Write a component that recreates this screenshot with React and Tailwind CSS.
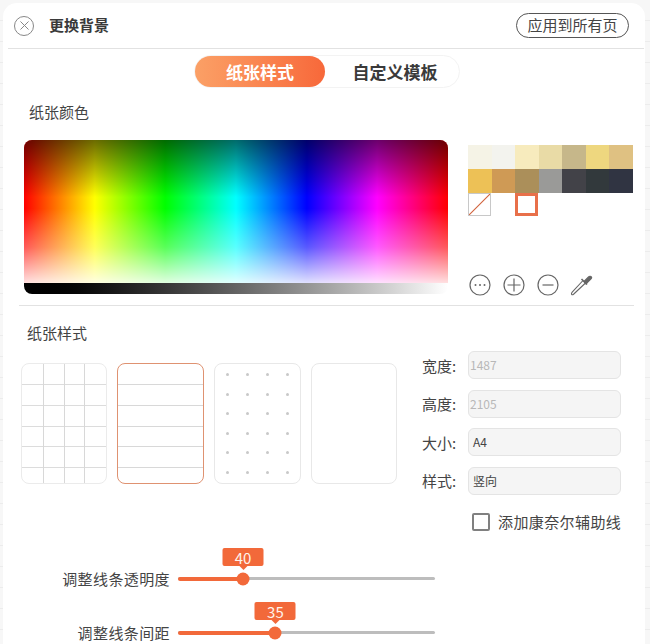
import React from "react";
import { X } from "lucide-react";

const cjk = "font-['Noto_Sans_CJK_SC','Noto_Sans',sans-serif]";

const swatches = [
  "#f5f3e6", "#f3f3ee", "#f7ebbd", "#e9dba6", "#c6b78a", "#eed77f", "#dfc182",
  "#edc156", "#cf9a55", "#ab8f5a", "#9a9a98", "#424248", "#32393c", "#303442",
];

const fields = [
  { label: "宽度:", value: "1487", dim: true },
  { label: "高度:", value: "2105", dim: true },
  { label: "大小:", value: "A4" },
  { label: "样式:", value: "竖向" },
];

function GridCard() {
  return (
    <div className="relative h-[121px] w-[86px] overflow-hidden rounded-lg border-[1.5px] border-[#ebebeb] bg-white">
      {[20, 41, 62, 82, 103].map((y) => (
        <div key={y} className="absolute inset-x-0 h-px bg-[#dcdcdc]" style={{ top: y }} />
      ))}
      {[21, 42, 62].map((x) => (
        <div key={x} className="absolute inset-y-0 w-px bg-[#d8d8d8]" style={{ left: x }} />
      ))}
    </div>
  );
}

function LineCard() {
  return (
    <div className="relative h-[121px] w-[87px] overflow-hidden rounded-lg border-[1.5px] border-[#df9271] bg-white">
      {[20, 41, 62, 82, 103].map((y) => (
        <div key={y} className="absolute inset-x-0 h-px bg-[#d8d8d8]" style={{ top: y }} />
      ))}
    </div>
  );
}

function DotCard() {
  return (
    <div className="grid h-[121px] w-[87px] grid-cols-4 grid-rows-6 rounded-lg border border-[#e8e8e8] bg-white px-[2px] py-[1px]">
      {Array.from({ length: 24 }).map((_, i) => (
        <div key={i} className="flex items-center justify-center">
          <div className="size-[3px] rounded-full bg-[#c8c8c8]" />
        </div>
      ))}
    </div>
  );
}

function Slider({ label, value, percent }) {
  return (
    <div className="flex h-[18px] items-center">
      <div className="w-[167px] text-right text-[15px] leading-none tracking-[0.4px] text-[#444]">{label}</div>
      <div className="relative ml-[8px] h-[3px] w-[257px] rounded-full bg-[#bdbdbd]">
        <div className="h-[4px] rounded-full bg-[#f2693a]" style={{ width: `${percent}%` }} />
        <div className="absolute top-1/2 size-[13px] -translate-x-1/2 -translate-y-1/2 rounded-full bg-[#f2693a]" style={{ left: `${percent}%` }} />
        <div className="absolute bottom-[10px] -translate-x-1/2" style={{ left: `${percent}%` }}>
          <div className="flex h-[18px] w-[41px] items-center justify-center rounded-[2px] bg-[#f2693a] text-[15px] leading-none text-[#fff3ec]">
            {value}
          </div>
          <div className="mx-auto size-0 border-x-[4px] border-t-[4px] border-x-transparent border-t-[#f2693a]" />
        </div>
      </div>
    </div>
  );
}

export default function App() {
  return (
    <div className={`h-[644px] w-[650px] overflow-hidden bg-[#f7f7f7] bg-[repeating-linear-gradient(to_bottom,transparent_0px,transparent_20px,#ececec_20px,#ececec_21px)] pl-[3px] pr-[5px] pt-[3px] ${cjk}`}>
      <div className="h-[641px] w-[642px] rounded-t-[14px] bg-white">
        {/* Header */}
        <div className="ml-[5px] mr-px flex h-[46px] items-center justify-between border-b border-[#e2e2e2] pr-[15px]">
          <div className="flex items-center">
            <div className="ml-[6px] flex size-[20px] items-center justify-center rounded-full border-[1.5px] border-[#888]">
              <X size={15} strokeWidth={1.6} className="text-[#888]" />
            </div>
            <div className="ml-[15px] text-[15px] font-bold text-[#3a3a3a]">更换背景</div>
          </div>
          <button className="flex h-[25px] w-[113px] items-center justify-center rounded-full border border-[#555] text-[15px] text-[#444]">
            应用到所有页
          </button>
        </div>

        {/* Tabs */}
        <div className="ml-[191px] mt-[6px] flex h-[33px] w-[266px] rounded-full border border-[#f3f3f3]">
          <div className="flex w-[130px] shrink-0 items-center justify-center rounded-full bg-gradient-to-r from-[#fba066] to-[#f7683a] text-[17px] font-bold text-white">
            纸张样式
          </div>
          <div className="flex w-[134px] shrink-0 items-center justify-center pl-[6px] text-[17px] font-bold text-[#3a3a3a]">
            自定义模板
          </div>
        </div>

        <div className="ml-[26px] mt-[13px] text-[15px] leading-[22px] text-[#444]">纸张颜色</div>

        {/* Colour picker */}
        <div className="ml-[21px] mt-[17px] flex">
          <div className="h-[154px] w-[424px] overflow-hidden rounded-lg">
            <div className="h-[143px] bg-[linear-gradient(to_right,#f00_0%,#ff0_16.7%,#0f0_33.3%,#0ff_50%,#00f_66.7%,#f0f_83.3%,#f00_100%)]">
              <div className="h-full bg-[linear-gradient(to_bottom,rgba(0,0,0,0.58)_0%,rgba(0,0,0,0)_40%,rgba(255,255,255,0)_48%,rgba(255,255,255,0.35)_75%,rgba(255,255,255,0.88)_100%)]" />
            </div>
            <div className="h-[11px] bg-gradient-to-r from-black to-white" />
          </div>

          <div className="ml-[20px] mt-[5px] flex h-[153px] w-[165px] flex-col">
            <div className="grid grid-cols-7">
              {swatches.map((c) => (
                <div key={c} className="h-[24px]" style={{ background: c }} />
              ))}
            </div>
            <div className="flex h-[24px]">
              <div className="relative size-[23px] overflow-hidden border border-[#c8c8c8]">
                <svg viewBox="0 0 23 23" className="absolute inset-0 size-full">
                  <line x1="0" y1="23" x2="23" y2="0" stroke="#d0603a" strokeWidth="1.2" />
                </svg>
              </div>
              <div className="ml-[24px] size-[23px] border-[3px] border-[#e8704a]" />
            </div>

            <div className="mt-auto mb-[1px] flex items-center pl-[1px] text-[#666]">
              <svg width="22" height="22" viewBox="0 0 22 22" fill="none" stroke="currentColor" strokeWidth="1.2">
                <circle cx="11" cy="11" r="10" />
                <circle cx="6.5" cy="11" r="1" fill="currentColor" stroke="none" />
                <circle cx="11" cy="11" r="1" fill="currentColor" stroke="none" />
                <circle cx="15.5" cy="11" r="1" fill="currentColor" stroke="none" />
              </svg>
              <svg className="ml-[12px]" width="22" height="22" viewBox="0 0 22 22" fill="none" stroke="currentColor" strokeWidth="1.2">
                <circle cx="11" cy="11" r="10" />
                <path d="M11 4.5v13M4.5 11h13" />
              </svg>
              <svg className="ml-[12px]" width="22" height="22" viewBox="0 0 22 22" fill="none" stroke="currentColor" strokeWidth="1.2">
                <circle cx="11" cy="11" r="10" />
                <path d="M5.5 11h11" />
              </svg>
              <svg className="ml-[10px]" width="24" height="24" viewBox="0 0 24 24" fill="none" stroke="currentColor" strokeWidth="1.1">
                <path d="M14 7.5 3.2 19.2c-.7.8-.9 1.7-.6 2.2.5.5 1.4.3 2.2-.4L16.5 10" />
                <path d="m12.5 6 5.5 5.5" strokeWidth="1.6" />
                <path d="M15 8.5 19.5 4c1-1 2.2-1 2.7-.4.6.6.5 1.7-.4 2.6L17 11z" fill="currentColor" />
              </svg>
            </div>
          </div>
        </div>

        <div className="ml-[16px] mt-[7px] h-px w-[615px] bg-[#e2e2e2]" />

        <div className="ml-[24px] mt-[16px] text-[15px] leading-[22px] text-[#444]">纸张样式</div>

        {/* Paper styles and fields */}
        <div className="ml-[18px] flex">
          <div className="mt-[19px] flex h-[121px] gap-[10px]">
            <GridCard />
            <LineCard />
            <DotCard />
            <div className="h-[121px] w-[86px] rounded-lg border border-[#e8e8e8] bg-white" />
          </div>
          <div className="ml-[25px] mt-[7px] flex flex-col gap-[10.5px]">
            {fields.map((f) => (
              <div key={f.label} className="flex items-center">
                <div className="w-[46px] text-[15px] leading-none text-[#444]">{f.label}</div>
                <div className={`flex h-[28px] w-[153px] items-center rounded-md border border-[#e4e4e4] bg-[#f5f5f5] text-[12px] ${f.dim ? "pl-[1px] text-[#b8b8b8]" : "pl-[4px] text-[#444]"}`}>
                  {f.value}
                </div>
              </div>
            ))}
          </div>
        </div>

        <div className="ml-[469px] mt-[18px] flex items-center">
          <div className="size-[18px] rounded-[2px] border-2 border-[#808080]" />
          <div className="ml-[8px] text-[15px] leading-none tracking-[0.4px] text-[#444]">添加康奈尔辅助线</div>
        </div>

        {/* Sliders */}
        <div className="mt-[39px] flex flex-col gap-[36px]">
          <Slider label="调整线条透明度" value="40" percent={25.3} />
          <Slider label="调整线条间距" value="35" percent={37.9} />
        </div>
      </div>
    </div>
  );
}
